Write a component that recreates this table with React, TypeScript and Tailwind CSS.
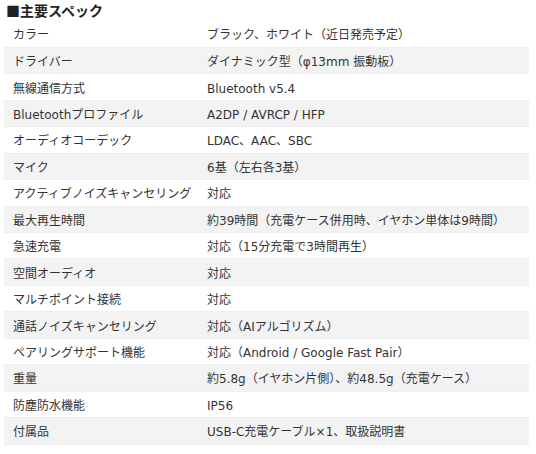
const specs: [string, string][] = [
  ['カラー', 'ブラック、ホワイト（近日発売予定）'],
  ['ドライバー', 'ダイナミック型（φ13mm 振動板）'],
  ['無線通信方式', 'Bluetooth v5.4'],
  ['Bluetoothプロファイル', 'A2DP / AVRCP / HFP'],
  ['オーディオコーデック', 'LDAC、AAC、SBC'],
  ['マイク', '6基（左右各3基）'],
  ['アクティブノイズキャンセリング', '対応'],
  ['最大再生時間', '約39時間（充電ケース併用時、イヤホン単体は9時間）'],
  ['急速充電', '対応（15分充電で3時間再生）'],
  ['空間オーディオ', '対応'],
  ['マルチポイント接続', '対応'],
  ['通話ノイズキャンセリング', '対応（AIアルゴリズム）'],
  ['ペアリングサポート機能', '対応（Android / Google Fast Pair）'],
  ['重量', '約5.8g（イヤホン片側）、約48.5g（充電ケース）'],
  ['防塵防水機能', 'IP56'],
  ['付属品', 'USB-C充電ケーブル×1、取扱説明書'],
]

export default function App() {
  return (
    <div className="w-[536px] h-[454px] bg-white text-[#333] overflow-hidden">
      <h2
        className="pl-[6px] h-[21px] text-[14px] leading-[21px] font-bold text-[#222]"
        style={{ fontFamily: '"Noto Sans CJK JP", sans-serif' }}
      >
        ■主要スペック
      </h2>
      <table
        className="ml-[4px] w-[525px] table-fixed border-collapse text-[12px]"
        style={{ fontFamily: '"DejaVu Sans", "Noto Sans CJK JP", sans-serif' }}
      >
        <colgroup>
          <col className="w-[195px]" />
          <col />
        </colgroup>
        <tbody>
          {specs.map(([label, value], i) => (
            <tr
              key={label}
              className={`h-[26.45px] border-b border-[#efefef] ${i % 2 === 1 ? 'bg-[#f3f3f3]' : 'bg-white'}`}
            >
              <td className="pl-[9px] pt-[3px] pb-0 leading-none whitespace-nowrap align-middle">{label}</td>
              <td className="pl-[8px] pt-[3px] pb-0 leading-none whitespace-nowrap align-middle">{value}</td>
            </tr>
          ))}
        </tbody>
      </table>
    </div>
  )
}
